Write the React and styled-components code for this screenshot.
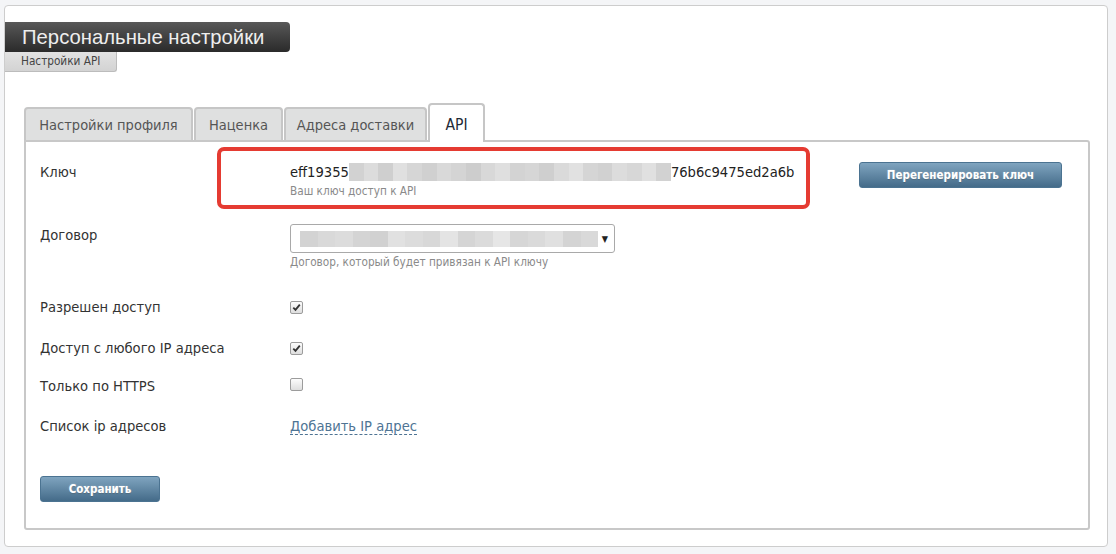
import styled, { createGlobalStyle } from 'styled-components'

const GlobalStyle = createGlobalStyle`
  body {
    margin: 0;
    background: #f4f5f7;
    font-family: "DejaVu Sans Condensed", "DejaVu Sans", sans-serif;
    color: #333;
  }
`

const Page = styled.div`
  padding: 5px 8px 5px 4px;
`

const Card = styled.div`
  background: #fff;
  border: 1px solid #cdcdcd;
  border-radius: 4px;
  height: 542px;
  box-sizing: border-box;
  padding-top: 16px;
`

const TitleBar = styled.h1`
  margin: 0;
  width: 285px;
  height: 30px;
  box-sizing: border-box;
  padding-left: 17px;
  background: linear-gradient(#585858, #2a2a2a);
  border-radius: 0 4px 4px 0;
  color: #eee;
  font: normal 20.3px/30px "Liberation Sans", Arial, sans-serif;
`

const Crumb = styled.div`
  width: 112px;
  height: 20px;
  box-sizing: border-box;
  padding-left: 16px;
  background: linear-gradient(#e2e2e2, #d3d3d3);
  border: 1px solid #bcbcbc;
  border-top: none;
  border-left: none;
  border-radius: 0 0 3px 0;
  font-size: 11.7px;
  line-height: 19px;
  color: #444;
`

const TabsArea = styled.div`
  margin: 31px 0 0 19px;
  width: 1066px;
`

const TabList = styled.div`
  display: flex;
  align-items: flex-end;
  gap: 1px;
  height: 39px;
  margin-bottom: -2px;
  position: relative;
  z-index: 1;
`

const Tab = styled.div`
  box-sizing: border-box;
  width: ${(p) => p.$w}px;
  text-align: center;
  border: 2px solid #c6c6c6;
  border-bottom: none;
  border-radius: 4px 4px 0 0;
  background: ${(p) => (p.$active ? '#fff' : '#dfe0e0')};
  color: ${(p) => (p.$active ? '#1f2a36' : '#555')};
  height: ${(p) => (p.$active ? 39 : 33)}px;
  margin-bottom: ${(p) => (p.$active ? 0 : 2)}px;
  font-size: ${(p) => (p.$active ? 15.5 : 14.5)}px;
  line-height: ${(p) => (p.$active ? 41 : 33)}px;
`

const Panel = styled.div`
  border: 2px solid #c8c8c8;
  border-radius: 0 3px 3px 3px;
  height: 390px;
  box-sizing: border-box;
  padding: 0 26px 0 14px;
`

const Row = styled.div`
  display: grid;
  grid-template-columns: 250px 1fr auto;
  align-items: start;
  margin-top: ${(p) => p.$top}px;
`

const Label = styled.div`
  font-size: 14.6px;
  line-height: 20px;
  color: #333;
`

const Value = styled.div`
  position: relative;
  font-size: 14.6px;
  line-height: 20px;
`

const Hint = styled.div`
  font-size: 11.7px;
  line-height: 18px;
  color: #8a8a8a;
`

const KeyLine = styled.div`
  display: flex;
  align-items: center;
  color: #222;
`

const Smudge = styled.div`
  display: flex;
  height: ${(p) => p.$h}px;
  width: ${(p) => p.$w}px;
`

const SmudgeCell = styled.span`
  flex: 1;
`

const Highlight = styled.div`
  position: absolute;
  left: -73px;
  top: -15px;
  width: 593px;
  height: 62px;
  box-sizing: border-box;
  border: 4px solid #e53b32;
  border-radius: 7px;
  pointer-events: none;
`

const BlueButton = styled.button`
  height: 26px;
  width: ${(p) => p.$w}px;
  border: 1px solid #4b7391;
  border-radius: 3px;
  background: linear-gradient(#7fa4bf, #446b89);
  color: #fff;
  font: bold 11.5px/24px "DejaVu Sans Condensed", "DejaVu Sans", sans-serif;
  text-shadow: 0 0 2px rgba(255, 255, 255, 0.35), 0 1px 1px rgba(0, 0, 0, 0.25);
  padding: 0;
  cursor: pointer;
`

const SelectBox = styled.div`
  display: flex;
  align-items: center;
  justify-content: space-between;
  width: 325px;
  height: 29px;
  box-sizing: border-box;
  border: 1px solid #a9a9a9;
  border-radius: 3px;
  padding: 0 6px 0 9px;
  margin-top: -1px;
`

const Arrow = styled.span`
  font-size: 9px;
  color: #222;
`

const Check = styled.span`
  display: inline-flex;
  align-items: center;
  justify-content: center;
  width: 11px;
  height: 11px;
  margin-top: 2px;
  border: 1px solid #9c9c9c;
  border-radius: 2px;
  background: linear-gradient(#fcfcfc, #dedede);
`

const DashedLink = styled.a`
  color: #4e7494;
  text-decoration: none;
  border-bottom: 1px dashed #4e7494;
  cursor: pointer;
`

const SaveRow = styled.div`
  margin-top: 40px;
`

const keyBlur = ['#d2d2d2', '#dcdcdc', '#cfcfcf', '#e0e0e0', '#d6d6d6', '#d0d0d0', '#d9d9d9', '#d4d4d4', '#cdcdcd', '#d8d8d8', '#dfdfdf', '#d3d3d3', '#d6d6d6', '#cfcfcf', '#dadada', '#e1e1e1', '#d5d5d5', '#d1d1d1', '#dcdcdc', '#d7d7d7', '#e0e0e0', '#d2d2d2']
const contractBlur = ['#d3d3d3', '#d9d9d9', '#dcdcdc', '#d4d4d4', '#d1d1d1', '#e1e1e1', '#dcdcdc', '#d8d8d8', '#e4e4e4', '#d5d5d5', '#dbdbdb', '#e6e6e6', '#d6d6d6', '#dadada', '#e0e0e0', '#d4d4d4', '#d9d9d9']

const Blur = ({ colors, w, h }) => (
  <Smudge $w={w} $h={h}>
    {colors.map((c, i) => (
      <SmudgeCell key={i} style={{ background: c }} />
    ))}
  </Smudge>
)

const Checkbox = ({ checked }) => (
  <Check>
    {checked && (
      <svg width="9" height="9" viewBox="0 0 9 9">
        <path d="M1.3 4.6 L3.5 6.9 L7.8 1.6" fill="none" stroke="#333" strokeWidth="1.8" />
      </svg>
    )}
  </Check>
)

const tabs = [
  { name: 'Настройки профиля', w: 169 },
  { name: 'Наценка', w: 89 },
  { name: 'Адреса доставки', w: 143 },
  { name: 'API', w: 57, active: true },
]

const App = () => (
  <Page>
    <GlobalStyle />
    <Card>
      <TitleBar>Персональные настройки</TitleBar>
      <Crumb>Настройки API</Crumb>

      <TabsArea>
        <TabList>
          {tabs.map((t) => (
            <Tab key={t.name} $w={t.w} $active={t.active}>
              {t.name}
            </Tab>
          ))}
        </TabList>

        <Panel>
          <Row $top={20}>
            <Label>Ключ</Label>
            <Value>
              <KeyLine>
                eff19355
                <Blur colors={keyBlur} w={322} h={18} />
                76b6c9475ed2a6b
              </KeyLine>
              <Hint>Ваш ключ доступ к API</Hint>
              <Highlight />
            </Value>
            <BlueButton $w={203}>Перегенерировать ключ</BlueButton>
          </Row>

          <Row $top={25}>
            <Label>Договор</Label>
            <Value>
              <SelectBox>
                <Blur colors={contractBlur} w={298} h={16} />
                <Arrow>▼</Arrow>
              </SelectBox>
              <Hint>Договор, который будет привязан к API ключу</Hint>
            </Value>
          </Row>

          <Row $top={26}>
            <Label>Разрешен доступ</Label>
            <Value>
              <Checkbox checked />
            </Value>
          </Row>

          <Row $top={21}>
            <Label>Доступ с любого IP адреса</Label>
            <Value>
              <Checkbox checked />
            </Value>
          </Row>

          <Row $top={18}>
            <Label>Только по HTTPS</Label>
            <Value>
              <Checkbox />
            </Value>
          </Row>

          <Row $top={20}>
            <Label>Список ip адресов</Label>
            <Value>
              <DashedLink>Добавить IP адрес</DashedLink>
            </Value>
          </Row>

          <SaveRow>
            <BlueButton $w={120}>Сохранить</BlueButton>
          </SaveRow>
        </Panel>
      </TabsArea>
    </Card>
  </Page>
)

export default App
